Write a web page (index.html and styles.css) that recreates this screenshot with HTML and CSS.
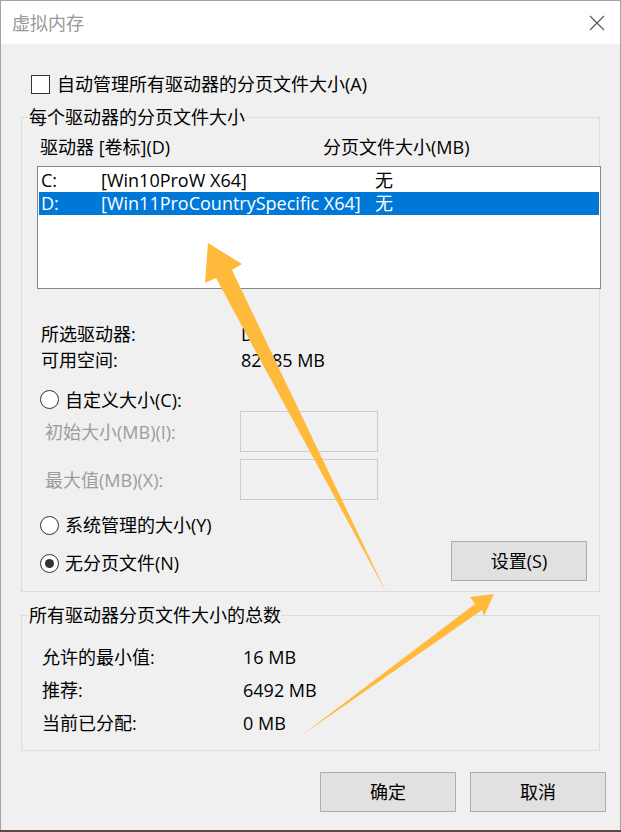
FILE: index.html
```html
<!DOCTYPE html>
<html lang="zh-CN">
<head>
<meta charset="utf-8">
<title>虚拟内存</title>
<link rel="stylesheet" href="styles.css">
</head>
<body>
<div class="window">
  <div class="titlebar">
    <span class="title">虚拟内存</span>
    <svg class="close" viewBox="0 0 16 16" aria-hidden="true"><path d="M1 1L15 15M15 1L1 15" stroke="#555" stroke-width="1.1" fill="none"/></svg>
  </div>
  <div class="content">
    <div class="check-row"><span class="checkbox"></span><span>自动管理所有驱动器的分页文件大小(A)</span></div>

    <fieldset class="group group-drives">
      <legend>每个驱动器的分页文件大小</legend>
      <div class="group-body drives-body">
        <div class="list-head"><span class="col-drive">驱动器 [卷标](D)</span><span>分页文件大小(MB)</span></div>
        <div class="listbox">
          <div class="row"><span class="c1">C:</span><span class="c2">[Win10ProW X64]</span><span>无</span></div>
          <div class="row selected"><span class="c1">D:</span><span class="c2">[Win11ProCountrySpecific X64]</span><span>无</span></div>
        </div>
        <div class="info">
          <span>所选驱动器:</span><span>D:</span>
          <span>可用空间:</span><span>82785 MB</span>
        </div>
        <div class="radio-row first"><span class="radio"></span><span>自定义大小(C):</span></div>
        <div class="size-fields">
          <span class="disabled">初始大小(MB)(I):</span><span class="input"></span>
          <span class="disabled">最大值(MB)(X):</span><span class="input"></span>
        </div>
        <div class="bottom-row">
          <div class="radios">
            <div class="radio-row"><span class="radio"></span><span>系统管理的大小(Y)</span></div>
            <div class="radio-row"><span class="radio checked"></span><span>无分页文件(N)</span></div>
          </div>
          <button class="btn set-btn">设置(S)</button>
        </div>
      </div>
    </fieldset>

    <fieldset class="group group-total">
      <legend>所有驱动器分页文件大小的总数</legend>
      <div class="group-body totals">
        <span>允许的最小值:</span><span>16 MB</span>
        <span>推荐:</span><span>6492 MB</span>
        <span>当前已分配:</span><span>0 MB</span>
      </div>
    </fieldset>

    <div class="actions">
      <button class="btn">确定</button>
      <button class="btn">取消</button>
    </div>
  </div>
</div>
<svg class="annotations" viewBox="0 0 621 832" aria-hidden="true">
  <polygon fill="#ffba3b" points="208,243 242,264 232,270 386,592 216,278 205,283"/>
  <polygon fill="#ffba3b" points="494,594 484,616 482,610 302,735 475,604 470,597"/>
</svg>
</body>
</html>
```

FILE: styles.css
```css
* { box-sizing: border-box; }

html, body {
  margin: 0;
  padding: 0;
}

body {
  position: relative;
  width: 621px;
  height: 832px;
  overflow: hidden;
  background: #5b4a3f;
  font-family: "Open Sans", "Noto Sans CJK SC", sans-serif;
  font-size: 18px;
  line-height: 24px;
  color: #000;
}

.window {
  width: 621px;
  height: 830px;
  background: #f0f0f0;
  border: 1px solid #a3a3a3;
  border-bottom: none;
}

.titlebar {
  height: 43px;
  background: #fff;
  display: flex;
  align-items: center;
  justify-content: space-between;
  padding: 0 15px 0 11px;
}

.title { color: #999; }

.close {
  width: 16px;
  height: 16px;
  display: block;
}

.content { padding-top: 28px; }

.check-row {
  display: flex;
  align-items: center;
  gap: 7px;
  height: 24px;
  padding-left: 30px;
}

.checkbox {
  width: 19px;
  height: 19px;
  border: 1px solid #333;
  background: #fff;
  flex: none;
}

.group {
  margin: 0 20px;
  padding: 0;
  min-width: 0;
  border: 1px solid #dcdcdc;
}

.group legend {
  margin-left: 7px;
  padding: 0;
  line-height: 24px;
}

.group-drives { margin-top: 9px; }

.drives-body { padding: 6px 12px 10px 15px; }

.list-head {
  display: flex;
  height: 24px;
  padding-left: 3px;
}

.col-drive { width: 283px; }

.listbox {
  margin-top: 7px;
  width: 564px;
  height: 123px;
  border: 1px solid #828790;
  background: #fff;
  padding: 2px 1px;
}

.row {
  display: flex;
  height: 23px;
  line-height: 23px;
  padding-left: 2px;
  white-space: nowrap;
}

.row.selected {
  background: #0078d7;
  color: #fff;
}

.c1 { width: 60px; }
.c2 { width: 274px; }

.info {
  margin-top: 32px;
  padding-left: 4px;
  display: grid;
  grid-template-columns: 200px auto;
  grid-auto-rows: 26px;
  align-items: center;
}

.radio-row {
  display: flex;
  align-items: center;
  gap: 6px;
  height: 24px;
  padding-left: 3px;
}

.radio-row.first {
  margin-top: 15px;
  height: 23px;
}

.radio {
  width: 19px;
  height: 19px;
  border: 1px solid #333;
  border-radius: 50%;
  background: #fff;
  flex: none;
  display: flex;
  align-items: center;
  justify-content: center;
}

.radio.checked::after {
  content: "";
  width: 9px;
  height: 9px;
  border-radius: 50%;
  background: #333;
}

.size-fields {
  display: grid;
  grid-template-columns: 195px 138px;
  grid-auto-rows: 41px;
  row-gap: 7px;
  align-items: center;
  padding-left: 8px;
}

.disabled { color: #9d9d9d; }

.input {
  height: 41px;
  border: 1px solid #cccccc;
  background: #f0f0f0;
}

.bottom-row {
  display: flex;
  justify-content: space-between;
  align-items: flex-start;
  margin-top: 13px;
}

.radios {
  display: flex;
  flex-direction: column;
  gap: 14px;
}

.btn {
  width: 136px;
  height: 40px;
  padding: 0;
  background: #e1e1e1;
  border: 1px solid #adadad;
  font: inherit;
  color: #000;
}

.set-btn { margin-top: 28px; }

.group-total { margin-top: 11px; }

.totals {
  padding: 18px 0 15px 20px;
  display: grid;
  grid-template-columns: 201px auto;
  grid-auto-rows: 24px;
  row-gap: 9px;
  align-items: center;
}

.actions {
  display: flex;
  justify-content: flex-end;
  gap: 14px;
  margin-top: 21px;
  padding-right: 14px;
}

.annotations {
  position: absolute;
  left: 0;
  top: 0;
  width: 621px;
  height: 832px;
  pointer-events: none;
}
```
